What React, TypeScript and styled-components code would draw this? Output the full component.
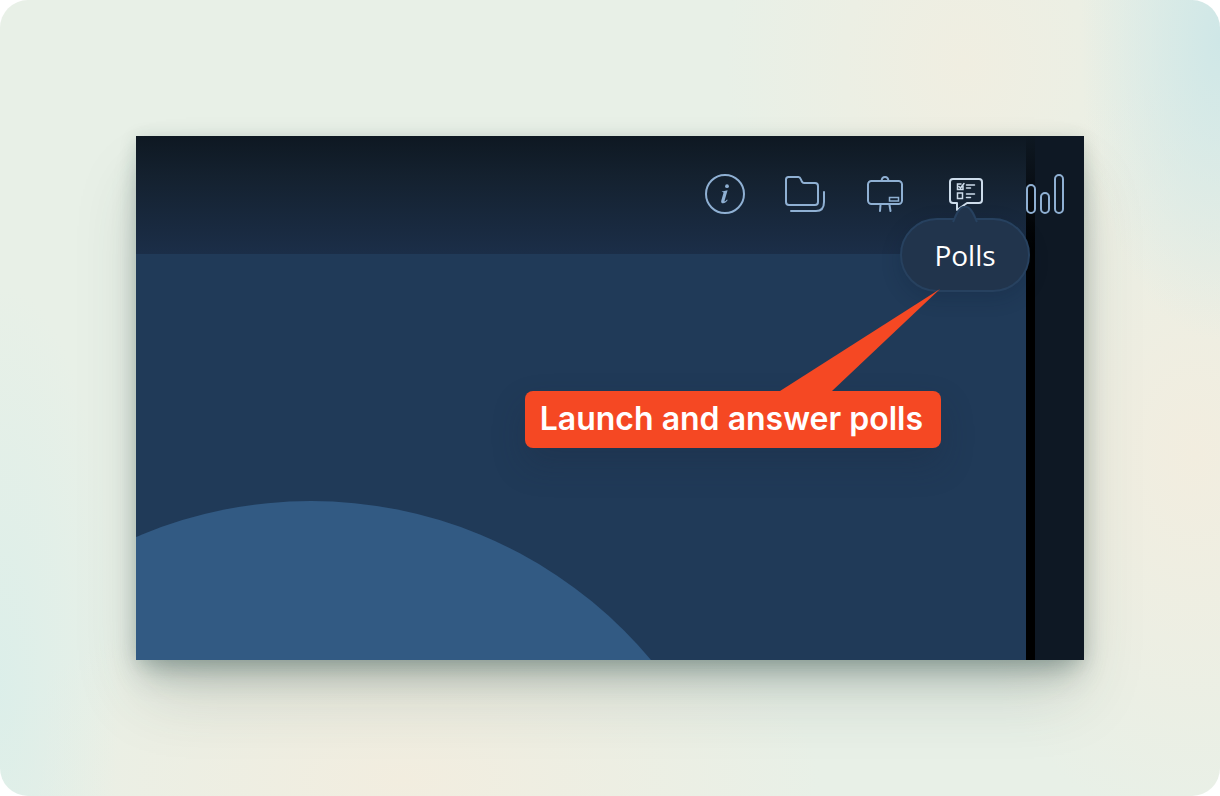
import React from "react";
import styled, { createGlobalStyle } from "styled-components";

const GlobalStyle = createGlobalStyle`
  * { box-sizing: border-box; }
  body { margin: 0; background: #ffffff; }
`;

const Frame = styled.main`
  display: flex;
  min-height: 100vh;
  padding: 136px;
  border-radius: 28px;
  background:
    radial-gradient(ellipse 140px 300px at 100% 5%, #cfe7e7 0%, rgba(207, 231, 231, 0) 100%),
    radial-gradient(ellipse 120px 400px at 0% 86%, rgba(217, 238, 234, 0.8) 0%, rgba(217, 238, 234, 0) 100%),
    radial-gradient(ellipse 260px 380px at 98% 57%, #f2eddf 0%, rgba(242, 237, 223, 0) 100%),
    radial-gradient(ellipse 420px 200px at 33% 98%, #f2eddf 0%, rgba(242, 237, 223, 0) 100%),
    radial-gradient(ellipse 240px 300px at 79% 8%, #f0eee1 0%, rgba(240, 238, 225, 0) 100%),
    #e8f0e7;
`;

const Stage = styled.section`
  flex: 1;
  display: grid;
  grid-template: minmax(0, 1fr) / minmax(0, 1fr);
  background: #0e1824;
  box-shadow:
    0 2px 16px rgba(30, 66, 60, 0.16),
    0 20px 28px -8px rgba(30, 60, 56, 0.3),
    0 40px 64px -8px rgba(50, 66, 60, 0.18);
`;

const Backdrop = styled.div`
  grid-area: 1 / 1;
  display: grid;
  grid-template-columns: minmax(0, 1fr) 9px 49px;
`;

const Video = styled.div`
  display: flex;
  align-items: flex-end;
  overflow: hidden;
  background: linear-gradient(#0e1822, #14212f 40px, #1b2e48 118px, #203a58 118px);
`;

const Avatar = styled.svg`
  display: block;
  flex: none;
`;

const Divider = styled.div`
  background: linear-gradient(#0e1822, #070c12 60px, #000000 118px);
`;

const Content = styled.div`
  grid-area: 1 / 1;
  display: flex;
  flex-direction: column;
`;

const Toolbar = styled.nav`
  display: flex;
  justify-content: flex-end;
  gap: 40px;
  height: 118px;
  padding: 38px 19px 0;
`;

const ToolItem = styled.div`
  position: relative;
  width: 40px;
  height: 40px;
`;

const ToolButton = styled.button<{ $active?: boolean }>`
  display: block;
  width: 40px;
  height: 40px;
  padding: 0;
  border: 0;
  background: none;
  color: ${(p) => (p.$active ? "#cddceb" : "#8fb0d3")};
  cursor: pointer;

  svg {
    display: block;
    fill: none;
    stroke: currentColor;
    stroke-width: 2;
    stroke-linecap: round;
    stroke-linejoin: round;
  }
`;

const Tooltip = styled.div`
  position: absolute;
  top: 44px;
  left: 50%;
  width: 130px;
  margin-left: -65px;
  padding: 16px 0;
  border: 2px solid #27415f;
  border-radius: 37px;
  background: #21344c;
  box-shadow: 0 6px 20px rgba(12, 26, 44, 0.2);
  color: #ffffff;
  font: 500 28px/38px "Open Sans", "Noto Sans", sans-serif;
  text-align: center;
`;

const TooltipArrow = styled.svg`
  position: absolute;
  left: 50%;
  top: -14px;
  margin-left: -14px;
`;

const Annotation = styled.div`
  display: flex;
  justify-content: flex-end;
  padding: 137px 143px 0 0;
`;

const Callout = styled.p`
  position: relative;
  margin: 0;
  padding: 8px 18px 9px 15px;
  border-radius: 8px;
  background: #f54823;
  box-shadow: 0 16px 32px rgba(26, 40, 58, 0.25);
  color: #ffffff;
  font: 600 32px/40px Inter, sans-serif;
  white-space: nowrap;
`;

const CalloutTail = styled.svg`
  position: absolute;
  right: 0;
  bottom: 100%;
`;

const InfoIcon = () => (
  <svg width="40" height="40" viewBox="0 0 40 40" aria-hidden="true">
    <circle cx="20" cy="20" r="19" />
    <circle cx="22" cy="12.2" r="1.9" fill="currentColor" stroke="none" />
    <path
      d="M17 17.4l5.6-1.1-3 10.2c-.3 1.1.3 1.2 1 .5l1.4-1.5.7.5c-1.5 2.3-3 3.3-4.6 3.3-1.7 0-2.3-1.2-1.8-2.9l2.1-7.1c.3-.9 0-1.1-1.6-1.2z"
      fill="currentColor"
      stroke="none"
    />
  </svg>
);

const FilesIcon = () => (
  <svg width="40" height="40" viewBox="0 0 40 40" aria-hidden="true">
    <path d="M3.5 3H13.5C14.8 3 15.3 4 15.8 5.2L17 7.8C17.5 8.8 18 9 19 9H30C32 9 33 10 33 12V28C33 30 32 31 30 31H4C2 31 1 30 1 28V5.5C1 4 2 3 3.5 3Z" />
    <path d="M39 18V28C39 34 36 37 31 37H6" />
  </svg>
);

const WhiteboardIcon = () => (
  <svg width="40" height="40" viewBox="0 0 40 40" aria-hidden="true">
    <rect x="3" y="7" width="34" height="23" rx="3.5" />
    <path d="M16.5 7C17 1.7 23 1.7 23.5 7M15.5 31L15 37M24.5 31L25.500 37" />
    <rect x="24.5" y="23.5" width="9" height="3.5" strokeWidth="1.5" strokeLinejoin="miter" />
  </svg>
);

const PollsIcon = () => (
  <svg width="40" height="40" viewBox="0 0 40 40" aria-hidden="true">
    <path d="M8 5H34C36 5 37 6 37 8V26C37 28 36 29 34 29H22L12 36V29H8C6 29 5 28 5 26V8C5 6 6 5 8 5Z" />
    <g strokeWidth="1.5" strokeLinejoin="miter">
      <path d="M18 12V15.5H12.5V10H16M14 12.5L15.5 14L19 9.5" />
      <rect x="12.5" y="19" width="5" height="5.5" />
      <path d="M21.5 11H29.5M21.5 14H25.5M21.5 20H29.5M21.5 23.5H25.5" />
    </g>
  </svg>
);

const StatsIcon = () => (
  <svg width="40" height="40" viewBox="0 0 40 40" aria-hidden="true">
    <rect x="2" y="11" width="8" height="28" rx="4" />
    <rect x="16" y="19" width="8" height="20" rx="4" />
    <rect x="30" y="1" width="8" height="38" rx="4" />
  </svg>
);

const tools = [
  { label: "Information", Icon: InfoIcon },
  { label: "Files", Icon: FilesIcon },
  { label: "Whiteboard", Icon: WhiteboardIcon },
  { label: "Polls", Icon: PollsIcon, active: true },
  { label: "Statistics", Icon: StatsIcon },
];

export default function App() {
  return (
    <>
      <GlobalStyle />
      <Frame>
        <Stage>
          <Backdrop>
            <Video>
              <Avatar width="530" height="160" viewBox="0 0 530 160" aria-hidden="true">
                <circle cx="175" cy="444" r="443" fill="#325a83" />
              </Avatar>
            </Video>
            <Divider />
          </Backdrop>
          <Content>
            <Toolbar>
              {tools.map(({ label, Icon, active }) => (
                <ToolItem key={label}>
                  <ToolButton type="button" aria-label={label} $active={active}>
                    <Icon />
                  </ToolButton>
                  {active && (
                    <Tooltip role="tooltip">
                      <TooltipArrow width="28" height="18" viewBox="0 0 28 18" aria-hidden="true">
                        <path
                          d="M1 17C5 14 4 8 9 3C12 0 16 0 19 3C24 8 23 14 27 17"
                          fill="#21344c"
                        />
                        <path
                          d="M2 16C4 12 5 7 9 3C12 0 16 0 19 3C23 7 24 12 26 16"
                          fill="none"
                          stroke="#27415f"
                          strokeWidth="2"
                        />
                      </TooltipArrow>
                      {label}
                    </Tooltip>
                  )}
                </ToolItem>
              ))}
            </Toolbar>
            <Annotation>
              <Callout>
                <CalloutTail width="161" height="102" viewBox="0 0 161 102" aria-hidden="true">
                  <path d="M0 102L160 0L52 102Z" fill="#f54823" />
                </CalloutTail>
                Launch and answer polls
              </Callout>
            </Annotation>
          </Content>
        </Stage>
      </Frame>
    </>
  );
}
